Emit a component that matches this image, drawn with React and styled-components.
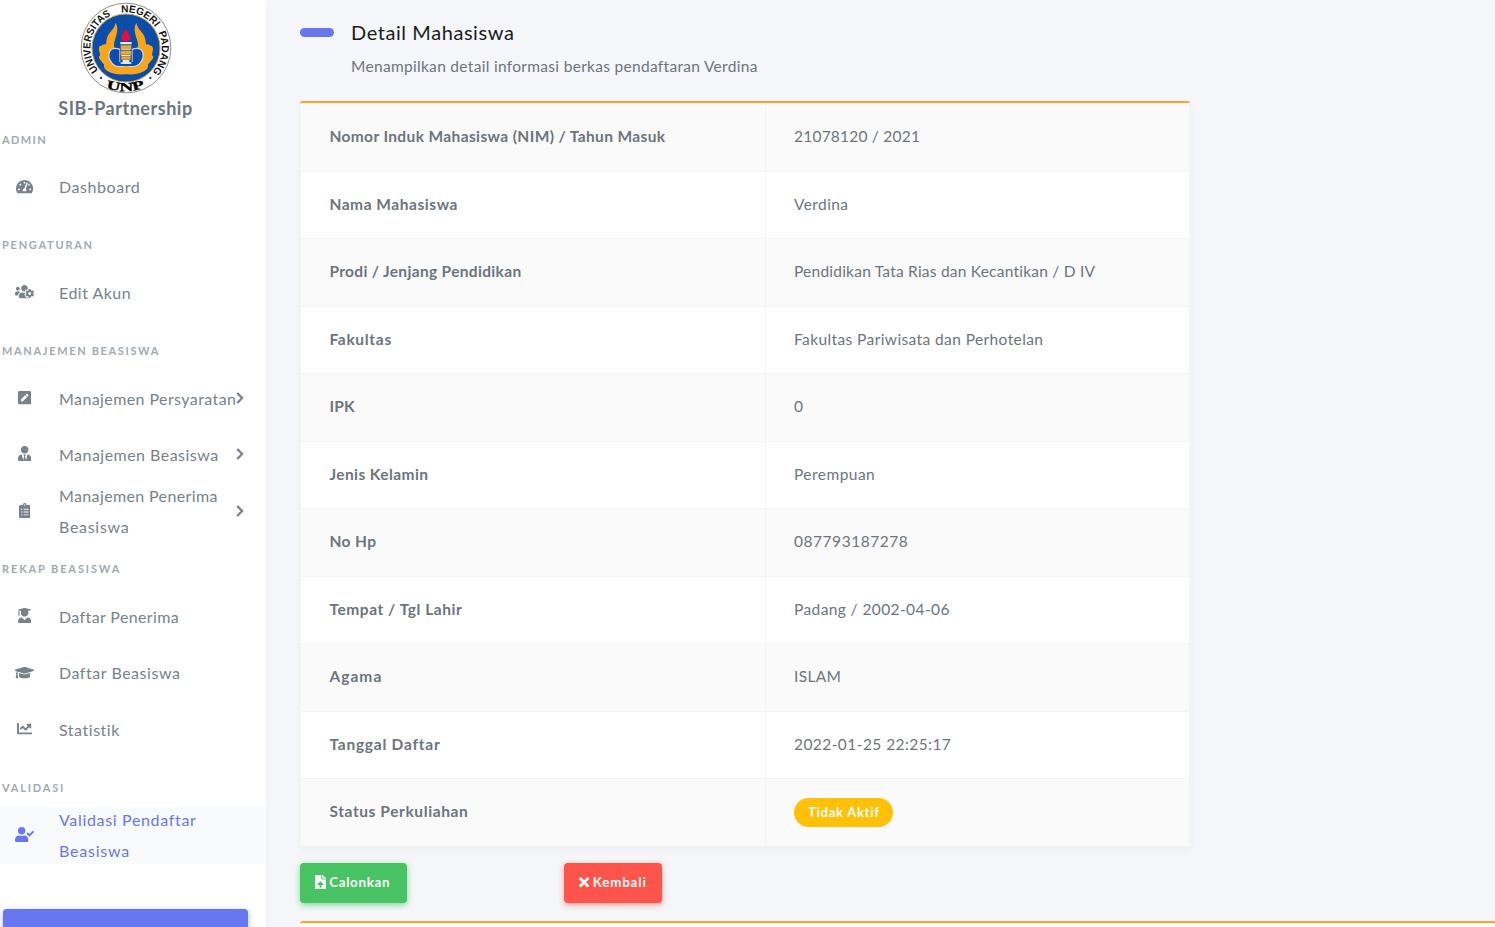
import React from 'react';
import styled, { createGlobalStyle } from 'styled-components';
import {
  FaTachometerAlt, FaUsersCog, FaPenSquare, FaUserTie, FaClipboardList, FaUserGraduate,
  FaGraduationCap, FaChartLine, FaUserCheck, FaFileUpload, FaTimes,
} from 'react-icons/fa';

const Global = createGlobalStyle`
  *, *::before, *::after { box-sizing: border-box; }
  body {
    margin: 0;
    height: 927px;
    overflow: hidden;
    background: #f4f6f9;
    color: #6c757d;
    font-family: Lato, "Open Sans", sans-serif;
    font-size: 15.5px;
  }
`;

const Page = styled.div`
  display: flex;
  height: 927px;
  overflow: hidden;
`;

const Sidebar = styled.aside`
  position: relative;
  z-index: 1;
  flex: none;
  width: 266px;
  height: 927px;
  background: #fff;
  box-shadow: 0 4px 8px rgba(0, 0, 0, 0.03);
`;

const SidebarClip = styled.div`
  height: 927px;
  overflow: hidden;
`;

const Brand = styled.div`
  display: flex;
  flex-direction: column;
  align-items: center;
  width: 251px;
  height: 119px;
  padding-top: 2px;
`;

const BrandName = styled.div`
  margin-top: 2px;
  font-size: 18px;
  font-weight: 700;
  line-height: 24px;
  letter-spacing: 0.52px;
`;

const MenuLabel = styled.div`
  height: ${(p) => (p.$first ? 40.3 : 49.2)}px;
  padding: ${(p) => (p.$first ? 12.4 : 20.6)}px 0 0 2px;
  color: #a2aab0;
  font-size: 11px;
  font-weight: 700;
  line-height: 18px;
  letter-spacing: ${(p) => p.$track}px;
  white-space: nowrap;
`;

const MenuItem = styled.a`
  display: flex;
  align-items: center;
  height: 56.4px;
  color: ${(p) => (p.$active ? '#6777ef' : '#78828a')};
  background: ${(p) => (p.$active ? '#f8fafb' : 'transparent')};
`;

const MenuIcon = styled.span`
  display: flex;
  justify-content: center;
  flex: none;
  width: 49px;
  margin: 0 10px 2.4px 0;
  svg { flex: none; width: ${(p) => p.$width}px; height: 15.2px; }
`;

const MenuText = styled.span`
  flex: none;
  width: 176px;
  padding-bottom: 1px;
  font-size: 16px;
  line-height: 31px;
`;

const Line = styled.span`
  display: block;
  white-space: nowrap;
  letter-spacing: ${(p) => p.$track}px;
`;

const ArrowSvg = styled.svg`
  flex: none;
  width: 8px;
  height: 12px;
  margin: 0 0 1.5px 0.5px;
`;

const SidebarButton = styled.div`
  width: 245px;
  height: 50px;
  margin: 45px 0 0 3px;
  border-radius: 4px;
  background: #6777ef;
  box-shadow: 0 2px 6px #acb5f6;
`;

const Main = styled.main`
  flex: 1;
  min-width: 0;
  padding: 20px 0 0 34px;
`;

const Heading = styled.header`
  display: flex;
  align-items: flex-start;
  gap: 17px;
  height: 81px;
`;

const Dash = styled.span`
  width: 34px;
  height: 9px;
  margin-top: 8px;
  border-radius: 5px;
  background: #6777ef;
`;

const Title = styled.h2`
  margin: 0;
  color: #191d21;
  font-size: 20px;
  font-weight: 400;
  line-height: 24px;
  letter-spacing: 0.57px;
`;

const Lead = styled.p`
  margin: 10px 0 0;
  line-height: 24px;
  letter-spacing: 0.305px;
`;

const Card = styled.section`
  width: ${(p) => p.$width};
  height: ${(p) => p.$height}px;
  border-top: 2px solid #ffa426;
  border-radius: 3px;
  background: ${(p) => (p.$plain ? '#fff' : '#f3f4f6')};
  box-shadow: 0 4px 8px rgba(0, 0, 0, 0.03);
`;

const Table = styled.div`
  width: 889px;
  margin-left: 1px;
  padding-top: 0.4px;
  background: #fff;
  border-right: 1px solid #f3f4f6;
  border-bottom: 1px solid #f3f3f4;
`;

const Row = styled.div`
  display: grid;
  grid-template-columns: 464px 1fr;
  height: 67.5px;
  border-top: 1px solid #f3f4f5;
  background: ${(p) => (p.$odd ? '#fafafa' : '#fff')};
`;

const Cell = styled.div`
  display: flex;
  align-items: center;
  padding: 0 28px 3px 28.4px;
  font-weight: ${(p) => (p.$head ? 700 : 400)};
  letter-spacing: ${(p) => p.$track}px;
  white-space: nowrap;
  & + & { padding-left: 28px; border-left: 1px solid #f3f4f5; }
`;

const Badge = styled.span`
  width: 99px;
  margin-top: 3px;
  padding: 0 13px 0 14px;
  border-radius: 15px;
  background: #ffc107;
  color: #fff;
  font-size: 13.3px;
  font-weight: 700;
  line-height: 29px;
  letter-spacing: 0.6px;
`;

const Actions = styled.div`
  display: flex;
  gap: 157px;
  height: 58px;
  margin-top: 16px;
`;

const Button = styled.button`
  display: flex;
  align-items: center;
  gap: ${(p) => p.$gap}px;
  width: ${(p) => p.$width}px;
  height: 40px;
  padding: 0 0 2px 15px;
  border: 0;
  border-radius: 4px;
  background: ${(p) => p.$color};
  box-shadow: 0 2px 6px ${(p) => p.$glow};
  color: #fff;
  font: 700 13.4px Lato, sans-serif;
  letter-spacing: ${(p) => p.$track}px;
  white-space: nowrap;
  svg { width: ${(p) => p.$icon}px; height: 14.5px; flex: none; }
`;

const LogoSvg = styled.svg`
  display: block;
  width: 92px;
  height: 92px;
  flex: none;
`;

function Arrow() {
  return (
    <ArrowSvg viewBox="0 0 8 12" fill="none" stroke="currentColor" strokeWidth="2.3">
      <path d="M1.2 1L6.2 6L1.2 11" strokeLinejoin="round" />
    </ArrowSvg>
  );
}

function Logo() {
  return (
    <LogoSvg viewBox="60 6 276 276">
      <defs>
        <path id="arcLeft" d="M114.8 211.3A107 107 0 0 1 157.9 44.8" />
        <path id="arcTop" d="M184 37.8A107 107 0 0 1 289.5 88" />
        <path id="arcRight" d="M295 97.5A107 107 0 0 1 273 220" />
        <path id="arcBottom" d="M138 264Q198 284 257 262" />
      </defs>
      <circle cx="198" cy="144" r="134.5" fill="#fff" stroke="#777" strokeWidth="2.5" />
      <circle cx="198" cy="144" r="102" fill="#0b4dab" stroke="#c8a13a" strokeWidth="3" />
      <g fontFamily="Liberation Sans, sans-serif" fontWeight="700" fontSize="31" fill="#161616">
        <text><textPath href="#arcLeft" textLength="194" lengthAdjust="spacingAndGlyphs">UNIVERSITAS</textPath></text>
        <text><textPath href="#arcTop" textLength="116" lengthAdjust="spacingAndGlyphs">NEGERI</textPath></text>
        <text><textPath href="#arcRight" textLength="128" lengthAdjust="spacingAndGlyphs">PADANG</textPath></text>
      </g>
      <text fontFamily="Liberation Serif, serif" fontWeight="700" fontSize="37" fill="#000" stroke="#000">
        <textPath href="#arcBottom" textLength="118" lengthAdjust="spacingAndGlyphs">UNP</textPath>
      </text>
      <circle cx="123" cy="234" r="3.5" fill="#333" />
      <circle cx="271" cy="234" r="3.5" fill="#333" />
      <path
        d="M167 68C164 88 146 96 142 112C137 124 141 130 136 134C129 130 129 138 119 138C112 150 124 162 119 168C112 171 122 182 132 193C128 211 152 226 197 223C243 226 268 211 264 193C274 182 285 171 278 168C272 162 284 150 276 138C267 138 267 130 260 134C255 130 259 124 254 112C250 96 232 88 229 68C219 85 226 103 232 122C237 139 233 148 220 151L220 184L176 184L176 151C163 148 159 139 164 122C170 103 177 85 167 68Z"
        fill="#f9a51a"
      />
      <path d="M180 148C146 136 139 166 154 187Q164 201 179 200L217 200Q232 201 242 187C257 166 250 136 216 148L216 184L180 184Z" fill="#0b4dab" stroke="#c4d6f3" strokeWidth="4" />
      <path d="M140 184Q168 211 198 197Q228 211 256 184L264 194Q240 222 198 221Q156 222 132 194Z" fill="#f9a51a" />
      <path d="M181 126h34v62h-34z" fill="#0b4dab" />
      <path d="M182 136h32v12h-32zM182 153h32v11h-32zM184 169h28v10h-28z" fill="#f9a51a" />
      <path d="M181 126h34v7h-34zM184 148h28v3h-28zM184 165h28v3h-28zM188 180h20v7h-20zM182 187h32v5h-32z" fill="#dfeaff" />
      <path d="M197 84C194 99 184 103 184 113C184 119 189 124 198 124C207 124 212 119 211 112C210 104 201 98 197 84Z" fill="#f00b37" />
    </LogoSvg>
  );
}

const menu = [
  { label: 'ADMIN', track: 1.4, items: [{ icon: FaTachometerAlt, width: 17.1, lines: [['Dashboard', 0.56]] }] },
  { label: 'PENGATURAN', track: 1.75, items: [{ icon: FaUsersCog, width: 19, lines: [['Edit Akun', 0.48]] }] },
  {
    label: 'MANAJEMEN BEASISWA', track: 1.66,
    items: [
      { icon: FaPenSquare, width: 13.3, arrow: true, lines: [['Manajemen Persyaratan', 0.41]] },
      { icon: FaUserTie, width: 13.3, arrow: true, lines: [['Manajemen Beasiswa', 0.47]] },
      { icon: FaClipboardList, width: 11.4, arrow: true, lines: [['Manajemen Penerima', 0.37], ['Beasiswa', 0.7]] },
    ],
  },
  {
    label: 'REKAP BEASISWA', track: 1.88,
    items: [
      { icon: FaUserGraduate, width: 13.3, lines: [['Daftar Penerima', 0.38]] },
      { icon: FaGraduationCap, width: 19, lines: [['Daftar Beasiswa', 0.53]] },
      { icon: FaChartLine, width: 15.2, lines: [['Statistik', 0.53]] },
    ],
  },
  {
    label: 'VALIDASI', track: 1.8,
    items: [{ icon: FaUserCheck, width: 19, active: true, lines: [['Validasi Pendaftar', 0.67], ['Beasiswa', 0.78]] }],
  },
];

const rows = [
  ['Nomor Induk Mahasiswa (NIM) / Tahun Masuk', 0.38, '21078120 / 2021', 0.22],
  ['Nama Mahasiswa', 0.55, 'Verdina', 0.4],
  ['Prodi / Jenjang Pendidikan', 0.33, 'Pendidikan Tata Rias dan Kecantikan / D IV', 0.225],
  ['Fakultas', 0.7, 'Fakultas Pariwisata dan Perhotelan', 0.4],
  ['IPK', 0.2, '0', 0],
  ['Jenis Kelamin', 0.42, 'Perempuan', 0.46],
  ['No Hp', 0.4, '087793187278', 0.54],
  ['Tempat / Tgl Lahir', 0.56, 'Padang / 2002-04-06', 0.4],
  ['Agama', 1.05, 'ISLAM', 0.35],
  ['Tanggal Daftar', 0.77, '2022-01-25 22:25:17', 0.43],
  ['Status Perkuliahan', 0.6, null, 0],
];

export default function App() {
  return (
    <Page>
      <Global />
      <Sidebar>
        <SidebarClip>
          <Brand>
            <Logo />
            <BrandName>SIB-Partnership</BrandName>
          </Brand>
          {menu.map((group, g) => (
            <nav key={group.label}>
              <MenuLabel $first={g === 0} $track={group.track}>{group.label}</MenuLabel>
              {group.items.map(({ icon: Icon, width, lines, arrow, active }) => (
                <MenuItem key={lines[0][0]} $active={active}>
                  <MenuIcon $width={width}><Icon preserveAspectRatio="none" /></MenuIcon>
                  <MenuText>
                    {lines.map(([text, track]) => <Line key={text} $track={track}>{text}</Line>)}
                  </MenuText>
                  {arrow && <Arrow />}
                </MenuItem>
              ))}
            </nav>
          ))}
          <SidebarButton />
        </SidebarClip>
      </Sidebar>
      <Main>
        <Heading>
          <Dash />
          <div>
            <Title>Detail Mahasiswa</Title>
            <Lead>Menampilkan detail informasi berkas pendaftaran Verdina</Lead>
          </div>
        </Heading>
        <Card $width="890px" $height={746}>
          <Table>
            {rows.map(([name, nameTrack, value, valueTrack], i) => (
              <Row key={name} $odd={i % 2 === 0}>
                <Cell $head $track={nameTrack}>{name}</Cell>
                <Cell $track={valueTrack}>{value === null ? <Badge>Tidak Aktif</Badge> : value}</Cell>
              </Row>
            ))}
          </Table>
        </Card>
        <Actions>
          <Button $width={107} $icon={10.9} $gap={3.3} $track={0.65} $color="#47c363" $glow="#81d694"><FaFileUpload />Calonkan</Button>
          <Button $width={98} $icon={10.2} $gap={3.5} $track={0.82} $color="#ff544b" $glow="#fd9b96"><FaTimes />Kembali</Button>
        </Actions>
        <Card $plain $width="1300px" $height={60} />
      </Main>
    </Page>
  );
}
